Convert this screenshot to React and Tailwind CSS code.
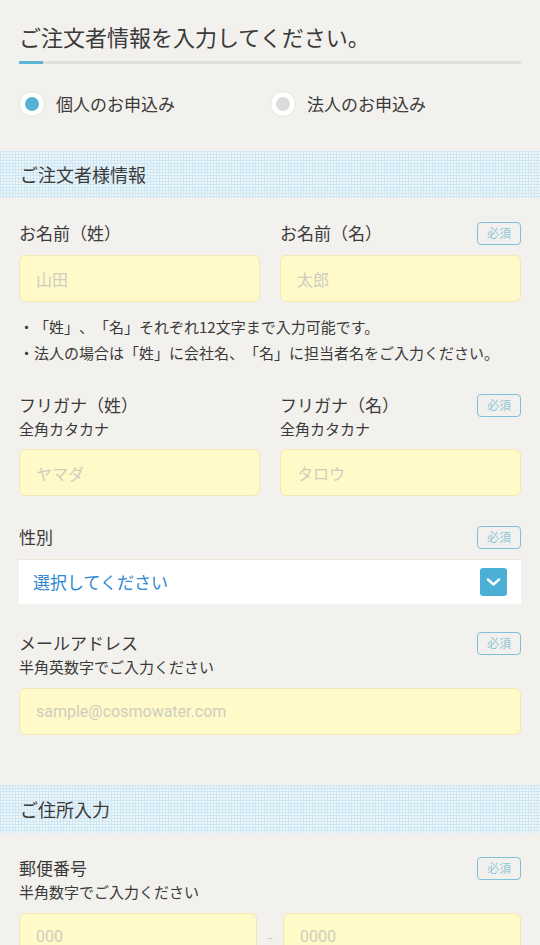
import React from "react";

const font = { fontFamily: '"Noto Sans CJK JP", "Noto Sans", sans-serif' };

function Badge() {
  return (
    <span className="flex h-[23px] w-[44px] items-center justify-center rounded-[4px] border-[1.5px] border-[#7fc1d9] text-[12px] leading-none text-[#8ec6da]">
      必須
    </span>
  );
}

function Input({ placeholder, latin }) {
  return (
    <div className="flex h-[47px] w-full items-center rounded-[6px] border border-[#f1e8b4] bg-[#fffac8] pl-[16px]">
      <span
        className="text-[16px] text-[#cfcdc0]"
        style={latin ? { fontFamily: '"Roboto", "Noto Sans", sans-serif' } : undefined}
      >
        {placeholder}
      </span>
    </div>
  );
}

function SectionHeader({ children, className = "" }) {
  return (
    <div
      className={
        "flex h-[47px] items-center bg-[#ebf5fa] bg-[linear-gradient(90deg,#cfe7f3_1px,transparent_1px),linear-gradient(#cfe7f3_1px,transparent_1px)] bg-[length:3px_3px] px-[20px] text-[18px] text-[#3a3a3a] " +
        className
      }
    >
      {children}
    </div>
  );
}

function Radio({ checked, label }) {
  return (
    <div className="flex items-center gap-[11px]">
      <span className="flex h-[26px] w-[26px] items-center justify-center rounded-full border border-[#e6e4e0] bg-white">
        <span className={"h-[14px] w-[14px] rounded-full " + (checked ? "bg-[#55b2d7]" : "bg-[#dcdcdc]")} />
      </span>
      <span className="text-[17px] text-[#3a3a3a]">{label}</span>
    </div>
  );
}

export default function App() {
  return (
    <div
      className="min-h-[945px] w-[540px] overflow-hidden bg-[#f3f1ed] text-[#3a3a3a] [text-spacing-trim:space-all]"
      style={font}
    >
      <div className="px-[19px] pt-[20px]">
        <h1 className="text-[22px] leading-[32px] font-normal text-[#3a3a3a]">ご注文者情報を入力してください。</h1>
        <div className="mt-[9px] flex h-[3px] w-full bg-[#e2e0dc]">
          <div className="h-full w-[24px] bg-[#5ab5d8]" />
        </div>
        <div className="mt-[27px] grid grid-cols-2">
          <Radio checked label="個人のお申込み" />
          <Radio label="法人のお申込み" />
        </div>
      </div>

      <SectionHeader className="mt-[34px]">ご注文者様情報</SectionHeader>

      <div className="px-[19px]">
        {/* Name */}
        <div className="mt-[23px] grid grid-cols-2 gap-[20px]">
          <div>
            <div className="flex h-[24px] items-center text-[17px]">お名前（姓）</div>
            <div className="mt-[10px]">
              <Input placeholder="山田" />
            </div>
          </div>
          <div>
            <div className="flex h-[24px] items-center justify-between text-[17px]">
              <span>お名前（名）</span>
              <Badge />
            </div>
            <div className="mt-[10px]">
              <Input placeholder="太郎" />
            </div>
          </div>
        </div>
        <div className="mt-[12px] text-[15px] leading-[26px] text-[#3a3a3a]">
          <p>・「姓」、「名」それぞれ12文字まで入力可能です。</p>
          <p>・法人の場合は「姓」に会社名、「名」に担当者名をご入力ください。</p>
        </div>

        {/* Furigana */}
        <div className="mt-[27px] grid grid-cols-2 gap-[20px]">
          <div>
            <div className="flex h-[24px] items-center text-[17px]">フリガナ（姓）</div>
            <div className="flex h-[24px] items-center text-[15px]">全角カタカナ</div>
            <div className="mt-[8px]">
              <Input placeholder="ヤマダ" />
            </div>
          </div>
          <div>
            <div className="flex h-[24px] items-center justify-between text-[17px]">
              <span>フリガナ（名）</span>
              <Badge />
            </div>
            <div className="flex h-[24px] items-center text-[15px]">全角カタカナ</div>
            <div className="mt-[8px]">
              <Input placeholder="タロウ" />
            </div>
          </div>
        </div>

        {/* Gender */}
        <div className="mt-[29px] flex h-[24px] items-center justify-between text-[17px]">
          <span>性別</span>
          <Badge />
        </div>
        <div className="mt-[10px] flex h-[45px] items-center justify-between border-t border-[#ece7d6] bg-white pl-[14px] pr-[14px]">
          <span className="text-[17px] text-[#2e87d1]">選択してください</span>
          <span className="flex h-[28px] w-[27px] items-center justify-center rounded-[3px] bg-[#4cafd6]">
            <svg width="15" height="10" viewBox="0 0 15 10" fill="none">
              <path d="M2 2.5 L7.5 7.5 L13 2.5" stroke="white" strokeWidth="2.4" strokeLinecap="round" strokeLinejoin="round" />
            </svg>
          </span>
        </div>

        {/* Email */}
        <div className="mt-[27px] flex h-[24px] items-center justify-between text-[17px]">
          <span>メールアドレス</span>
          <Badge />
        </div>
        <div className="flex h-[24px] items-center text-[15px]">半角英数字でご入力ください</div>
        <div className="mt-[9px]">
          <Input placeholder="sample@cosmowater.com" latin />
        </div>
      </div>

      <SectionHeader className="mt-[50px] h-[48px]">ご住所入力</SectionHeader>

      <div className="px-[19px]">
        <div className="mt-[23px] flex h-[24px] items-center justify-between text-[17px]">
          <span>郵便番号</span>
          <Badge />
        </div>
        <div className="flex h-[24px] items-center text-[15px]">半角数字でご入力ください</div>
        <div className="mt-[9px] flex items-center">
          <div className="w-[238px]">
            <Input placeholder="000" latin />
          </div>
          <span className="flex-1 text-center text-[14px] text-[#c8c6bd]">-</span>
          <div className="w-[238px]">
            <Input placeholder="0000" latin />
          </div>
        </div>
      </div>
    </div>
  );
}
